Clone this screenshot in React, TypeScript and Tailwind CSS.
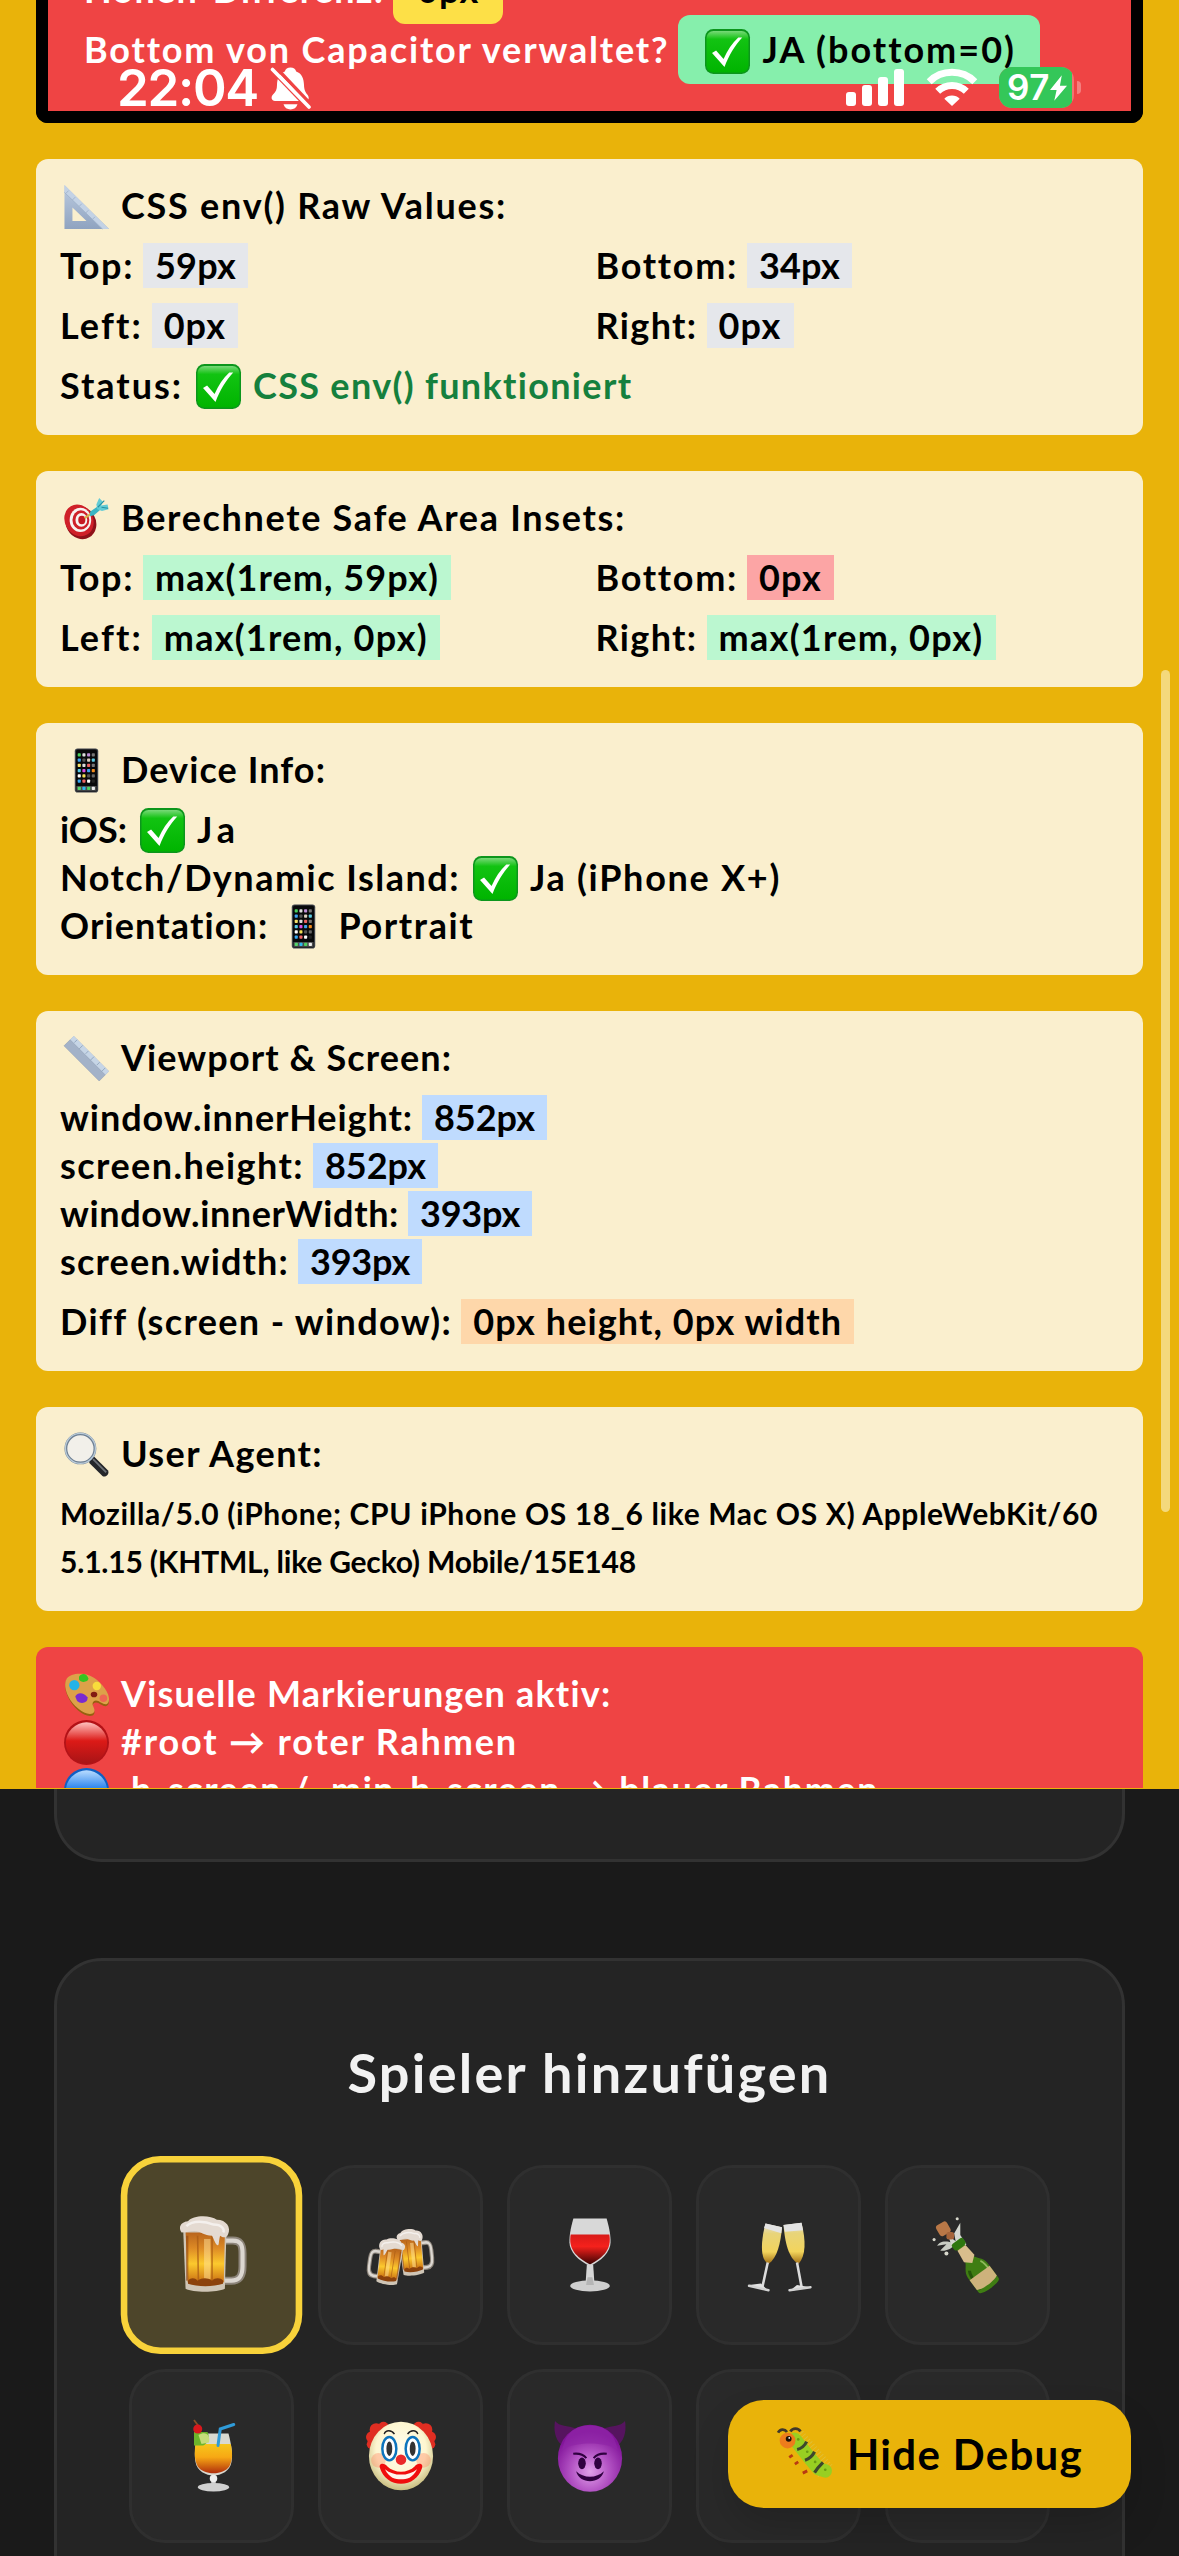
import { useLayoutEffect, useRef, useState } from "react";
import type { ReactNode } from "react";

/* Single-line text whose tracking is tuned so that it fills the given width. */
function Fit({ w, children, className = "" }: { w: number; children: string; className?: string }) {
  const ref = useRef<HTMLSpanElement>(null);
  const [spacing, setSpacing] = useState(0);
  useLayoutEffect(() => {
    const el = ref.current;
    if (!el) return;
    el.style.letterSpacing = "0px";
    const s = (w - el.getBoundingClientRect().width) / children.length;
    el.style.letterSpacing = `${s}px`;
    setSpacing(s);
  }, [w, children]);
  return (
    <span ref={ref} className={`inline-block shrink-0 whitespace-pre ${className}`} style={{ letterSpacing: `${spacing}px` }}>
      {children}
    </span>
  );
}

const Svg = ({ children, className = "size-[45px]" }: { children: ReactNode; className?: string }) => (
  <svg viewBox="0 0 48 48" className={`shrink-0 overflow-visible ${className}`} fill="none">
    {children}
  </svg>
);

const Check = () => (
  <Svg>
    <defs>
      <linearGradient id="ck" x1="0" y1="0" x2="0" y2="1">
        <stop offset="0" stopColor="#7ad97a" />
        <stop offset=".2" stopColor="#12c312" />
        <stop offset="1" stopColor="#00b400" />
      </linearGradient>
    </defs>
    <rect width="48" height="48" rx="9" fill="#0c961c" />
    <rect x="1.6" y="2" width="44.8" height="44.4" rx="7.5" fill="url(#ck)" />
    <path d="M7.5 25.5l4.3-2.6 8 9.2C24 22.500 29 15 35.500 9h4.200C31.500 18 25.500 28 20.800 40.500z" fill="#fff" />
  </Svg>
);

const SetSquare = () => (
  <Svg>
    <defs>
      <linearGradient id="sq" x1="0" y1="0" x2="0" y2="1">
        <stop offset="0" stopColor="#bccbe0" />
        <stop offset="1" stopColor="#8fa3c0" />
      </linearGradient>
    </defs>
    <path d="M0.500 1L48 48H0.500zM9 25v14.500h15z" fill="url(#sq)" fillRule="evenodd" />
    <path d="M0.500 1L48 48h-7L0.500 9z" fill="#c3d2e5" />
    <path d="M0.500 9L41 48" stroke="#9fb2cb" />
    <path d="M5 7l-3 3M12 14l-3 3M19 21l-3 3M26 28l-3 3M33 35l-3 3" stroke="#9fb2cb" />
  </Svg>
);

const Target = () => (
  <Svg>
    <ellipse cx="18" cy="28.500" rx="16" ry="18" transform="rotate(-30 18 28.500)" fill="#8e1119" />
    <ellipse cx="16" cy="26" rx="15" ry="17.500" transform="rotate(-30 16 26)" fill="#cf2029" />
    <ellipse cx="17.500" cy="25.500" rx="11.500" ry="13" fill="#f7f3f1" />
    <ellipse cx="18" cy="25.500" rx="9" ry="10.200" fill="#cf2029" />
    <ellipse cx="18.500" cy="25.500" rx="6.300" ry="7.300" fill="#f7f3f1" />
    <ellipse cx="19" cy="25.500" rx="3.800" ry="4.500" fill="#c51a23" />
    <path d="M22 23.500l8-5.500" stroke="#d8b34a" strokeWidth="2.200" />
    <path d="M28 16.500l9-6 3 3-8 7-4.500 1z" fill="#39b5c4" />
    <path d="M34.500 9l3-7 4 4-2 4 7-1 1 5-7 2-5-2z" fill="#62cbd5" />
    <path d="M36 12l7-7M40 12l7 1" stroke="#2492a3" strokeWidth="1.200" />
  </Svg>
);

const Phone = () => {
  const colors = ["#4ad15c", "#ddd", "#bf8fd8", "#777", "#3fa4f0", "#555", "#ddd0c0", "#5ccbe0", "#f5e36a", "#ddd", "#ee6262", "#777", "#56cbe9", "#da4ee0", "#3fa4f0", "#f08a1c", "#fff", "#f2df55", "#555", "#666", "#35a7f2", "#ee6464", "#fff", "#222"];
  return (
    <Svg>
      <rect x="11.500" y="0.500" width="25" height="47" rx="3" fill="#3e434a" />
      <rect x="12.800" y="1.500" width="22.400" height="45" rx="2" fill="#08090b" />
      {colors.map((c, i) => (
        <rect key={i} x={14.600 + (i % 4) * 5} y={5.500 + Math.floor(i / 4) * 5.600} width="3.300" height="3.600" rx="0.800" fill={c} />
      ))}
      <rect x="13.300" y="40.500" width="21.400" height="5.200" fill="#4b4d50" />
      {["#54d66a", "#2fb8ee", "#4dd05f", "#eee"].map((c, i) => (
        <rect key={c} x={14.600 + i * 5} y="41.400" width="3.400" height="3.500" rx="0.800" fill={c} />
      ))}
    </Svg>
  );
};

const Ruler = () => (
  <Svg>
    <path d="M10.500 0L48 37.500 37.500 48 0 10.500z" fill="#a3b2c8" />
    <path d="M10.500 0L48 37.500 44 41.500 6.500 4z" fill="#c6d5e6" />
    <path d="M6.500 4L44 41.500 37.500 48 0 10.500z" stroke="#8797ae" strokeOpacity=".5" />
    <path d="M14 4l-3 3M20 10l-4 4M26 16l-3 3M32 22l-4 4M38 28l-3 3M44 34l-4 4" stroke="#91a5bd" />
  </Svg>
);

const Magnifier = () => (
  <Svg>
    <path d="M27 30l5-4 15 15c2 4-3 8-6 6L27 33z" fill="#24262a" />
    <path d="M31 29l14 14" stroke="#6d7177" strokeWidth="2" />
    <circle cx="17.500" cy="17.500" r="15.500" fill="#f2f0ea" stroke="#6f8194" strokeWidth="3" />
    <circle cx="17.500" cy="17.500" r="16" stroke="#b9cad8" strokeWidth="1.400" />
  </Svg>
);

const Palette = () => (
  <Svg>
    <path d="M3 8C8 1 27 0 38 12c9 9 12 19 9 23-4 5-10-5-15-2-5 4 4 9-1 13C24 50 10 39 5 28 1 20 0 13 3 8z" fill="#96600f" />
    <path d="M3 7C8 0 27-1 38 11c9 9 12 18 9 22-4 5-10-5-15-2-5 4 4 9-1 13C24 48 10 37 5 27 1 19 0 12 3 7z" fill="#dda149" />
    <circle cx="11" cy="14" r="5.500" fill="#24b3e8" />
    <path d="M16 5c3-5 9-3 10 2 0 4-8 5-10 1z" fill="#36c421" />
    <circle cx="35" cy="15" r="4.500" fill="#f8dc3c" />
    <path d="M12 26c3-5 9-4 13 1 1 6-7 8-11 4z" fill="#7a2bd1" />
    <circle cx="42" cy="28" r="4" fill="#ef6553" />
    <ellipse cx="32" cy="24" rx="3.500" ry="3" fill="#821a12" />
  </Svg>
);

const RedBall = () => (
  <Svg>
    <defs>
      <linearGradient id="rb" x1="0" y1="0" x2="0" y2="1">
        <stop offset="0" stopColor="#ffc0bd" />
        <stop offset=".45" stopColor="#dc1a17" />
        <stop offset="1" stopColor="#a81416" />
      </linearGradient>
    </defs>
    <circle cx="24" cy="24" r="24" fill="#b31217" />
    <circle cx="24" cy="24.500" r="22" fill="url(#rb)" />
  </Svg>
);

const BlueBall = () => (
  <Svg>
    <defs>
      <linearGradient id="bb" x1="0" y1="0" x2="0" y2="1">
        <stop offset="0" stopColor="#b8dcff" />
        <stop offset=".5" stopColor="#1878ea" />
        <stop offset="1" stopColor="#0950ae" />
      </linearGradient>
    </defs>
    <circle cx="24" cy="24" r="24" fill="#0f5fc4" />
    <circle cx="24" cy="24.500" r="22" fill="url(#bb)" />
  </Svg>
);

const BeerDefs = () => (
  <defs>
    <linearGradient id="beer" x1="0" y1="0" x2="0" y2="1">
      <stop offset="0" stopColor="#b9651c" />
      <stop offset=".3" stopColor="#dd8a25" />
      <stop offset=".6" stopColor="#fcc92d" />
      <stop offset="1" stopColor="#c46410" />
    </linearGradient>
  </defs>
);

const Mug = () => (
  <>
    <path d="M31 15h6c5 0 6 3 6 8v8c0 6-2 9-7 9h-6" stroke="#8d857b" strokeWidth="5" />
    <path d="M31 15h6c5 0 6 3 6 8v8c0 6-2 9-7 9h-6" stroke="#dcd7d1" strokeWidth="2.600" />
    <path d="M6 8h27l-1 37c-5 2.500-20 2.500-24.500 0z" fill="#cfc5b6" />
    <path d="M7.500 10h24.500l-.7 31c-6 2-16 2-22.500 0z" fill="url(#beer)" />
    <path d="M15 12l.5 29M24 12v29" stroke="#a85a14" strokeOpacity=".7" />
    <path d="M8.500 12v28" stroke="#8f4510" strokeOpacity=".6" strokeWidth="1.500" />
    <path d="M19 14h4v25h-4z" fill="#ffe29a" fillOpacity=".5" />
    <path d="M9 40c2-2 4-2 6 0 3-2 6-2 9 0 2-2 5-2 7 0l-.2 2c-6 2-16 2-21.800 0z" fill="#8c420c" />
    <path d="M5 10C2 5 7 3 9 3c3-4 14-4 18-1 6 0 9 5 7 9-1 3-4 2-5 1-1 4-.5 6-1.500 6S25 14 24 12c-5 0-7-3-11-3-3 0-5 1-8 1z" fill="#e4dad1" />
    <path d="M8 6c4-4 12-3 17-1 5 0 7 3 6 5" stroke="#fff" strokeWidth="1.500" strokeOpacity=".6" />
  </>
);

const Beer = ({ className }: { className?: string }) => (
  <Svg className={className}>
    <BeerDefs />
    <Mug />
  </Svg>
);

const Cheers = () => (
  <Svg className="size-[68px]">
    <BeerDefs />
    <g transform="translate(18 7) rotate(-6) scale(.6 .7)">
      <Mug />
    </g>
    <g transform="translate(30 14) rotate(8) scale(-.6 .7)">
      <Mug />
    </g>
  </Svg>
);

const Wine = () => (
  <Svg className="size-[76px]">
    <defs>
      <linearGradient id="wn" x1="0" y1="0" x2="0" y2="1">
        <stop offset="0" stopColor="#d81a18" />
        <stop offset=".4" stopColor="#f5211c" />
        <stop offset="1" stopColor="#3a0303" />
      </linearGradient>
    </defs>
    <path d="M13.500 1h21c2 7 2.500 11 2.500 15 0 6-6 12-13 15-7-3-13-9-13-15 0-4 .5-8 2.500-15z" fill="#d8d8d8" />
    <path d="M11.800 11h24.400c1.500 9-3 14-12.200 19C14.800 25 10.300 20 11.800 11z" fill="url(#wn)" />
    <path d="M22 30h4l.8 12h-5.600z" fill="#d6d6d6" />
    <ellipse cx="24" cy="43.500" rx="12.500" ry="3.500" fill="#cfcfcf" />
    <path d="M22.500 38h3l1 5h-5z" fill="#b5b5b5" />
  </Svg>
);

const Flutes = () => (
  <Svg className="size-[72px]">
    <defs>
      <linearGradient id="fl" x1="0" y1="0" x2="0" y2="1">
        <stop offset="0" stopColor="#e4e0d8" />
        <stop offset=".25" stopColor="#e8d47a" />
        <stop offset=".7" stopColor="#f2d45c" />
        <stop offset="1" stopColor="#a06d14" />
      </linearGradient>
    </defs>
    <path d="M15 3l11 2.500c-1 11-3 20-9 24.500-6-3-5-16-2-27z" fill="url(#fl)" />
    <path d="M27 4l12-1.500c3 12 3 22-2 27.500C30 26 28 15 27 4z" fill="url(#fl)" />
    <path d="M15 3l11 2.500-.5 4L14 6z" fill="#e3e3e3" />
    <path d="M27 4l12-1.500 1 5-12 1z" fill="#e3e3e3" />
    <path d="M16.500 29L13 45M36 29l3 16" stroke="#dcdcdc" strokeWidth="1.700" />
    <path d="M4 44l8-1 5 5zM31 48l5-4 9 1.500z" fill="#e3e3e3" />
    <path d="M4 44.500l13 3M31 47.500l14-2" stroke="#d3d3d3" strokeWidth="1.600" strokeLinecap="round" />
  </Svg>
);

const Bottle = () => (
  <Svg className="size-[74px]">
    <path d="M14 16c-6-2-9 0-10 2l6-1-4 4c3 1 7-1 9-3z" fill="#c9cdc4" />
    <path d="M13 17l-2-6 5 4-1-5 4-7 0 8 4 6-5 4z" fill="#d5d8d0" />
    <rect x="4" y="3" width="8" height="8" rx="2" transform="rotate(-30 8 7)" fill="#b97847" />
    <rect x="10" y="9" width="5" height="5" rx="1.500" fill="#a5643a" />
    <g transform="translate(18 17) rotate(-36)">
      <path d="M-3 0h6v10c0 4 5 6 5 11v12c0 3-16 3-16 0V21c0-5 5-7 5-11z" fill="#3f7d13" />
      <path d="M-4.500 18c-2 3-1.500 8-1.500 14" stroke="#24540a" strokeWidth="2" />
      <path d="M5 17c2 3 1.500 8 1.500 14" stroke="#8fbb5a" strokeWidth="1.200" />
      <path d="M-3.200 3h6.400l1 8.500L0 15l-4.200-3.500z" fill="#d8bd8c" />
      <path d="M-8 23H8v8c-4 2-12 2-16 0z" fill="#cdb27c" />
      <rect x="-4.500" y="-2.500" width="9" height="5" rx="1.500" fill="#2e760f" />
    </g>
    <circle cx="17" cy="0.500" r="1" fill="#d8d8cc" />
    <circle cx="2" cy="14" r="1" fill="#d8d8cc" />
    <circle cx="10" cy="23" r="1.300" fill="#d8d8cc" />
  </Svg>
);

const Cocktail = () => (
  <Svg className="size-[72px]">
    <defs>
      <linearGradient id="ct" x1="0" y1="0" x2="0" y2="1">
        <stop offset="0" stopColor="#f6c61b" />
        <stop offset=".45" stopColor="#f7a814" />
        <stop offset="1" stopColor="#b02e0c" />
      </linearGradient>
    </defs>
    <path d="M14 9h21c2 8 3 14 2 19-1 6-7 9-12 9s-11-3-12-9c-1-5 0-11 1-19z" fill="#d9d9d0" />
    <path d="M13 16h23.500c1.500 7 1 11-1 15-4 6-17 6-21 0-2-4-2.500-8-1.500-15z" fill="url(#ct)" />
    <path d="M28 17l1.500-11 9-3" stroke="#2f9bd8" strokeWidth="2" strokeLinecap="round" />
    <path d="M12 8l9 0c2 4 0 8-3 9h-6z" fill="#6cb52b" />
    <path d="M15 10c5-3 8 0 7 5l-5 1z" fill="#c5dd7a" />
    <path d="M15 4L12 0" stroke="#8b4f24" strokeWidth="1.200" />
    <circle cx="14.500" cy="6" r="3" fill="#d9181c" />
    <path d="M23.500 37h3v6h-3z" fill="#ccc" />
    <circle cx="25" cy="39" r="2.500" fill="#eee" />
    <ellipse cx="25" cy="44.800" rx="10.500" ry="2.800" fill="#d0d0d0" />
  </Svg>
);

const Clown = () => (
  <Svg className="size-[70px]">
    <defs>
      <radialGradient id="cl" cx=".5" cy=".4" r=".6">
        <stop offset="0" stopColor="#fffef0" />
        <stop offset=".65" stopColor="#fdf6d0" />
        <stop offset="1" stopColor="#c8bd80" />
      </radialGradient>
    </defs>
    <g fill="#e02e22">
      <circle cx="7" cy="6" r="4.500" />
      <circle cx="4" cy="11" r="4" />
      <circle cx="12" cy="4" r="3.500" />
      <circle cx="3.500" cy="16" r="3" />
      <circle cx="41" cy="6" r="4.500" />
      <circle cx="44" cy="11" r="4" />
      <circle cx="36" cy="4" r="3.500" />
      <circle cx="44.500" cy="16" r="3" />
    </g>
    <ellipse cx="24" cy="24" rx="22" ry="23.500" fill="url(#cl)" />
    <circle cx="8.500" cy="27" r="5" fill="#ff8a66" fillOpacity=".4" />
    <circle cx="39.500" cy="27" r="5" fill="#ff8a66" fillOpacity=".4" />
    <ellipse cx="16" cy="19" rx="4.800" ry="8" fill="#fff" stroke="#0c74bd" strokeWidth="1.700" />
    <ellipse cx="32" cy="19" rx="4.800" ry="8" fill="#fff" stroke="#0c74bd" strokeWidth="1.700" />
    <ellipse cx="16" cy="19" rx="2" ry="5" fill="#333" />
    <ellipse cx="32" cy="19" rx="2" ry="5" fill="#333" />
    <path d="M12.500 9c1-3 5-3 7 0M28.500 9c2-3 6-3 7 0" stroke="#222" strokeWidth="1" />
    <path d="M9.500 32c-1-4 4-3 5-1 5 5 14 5 19 0 1-2 6-3 5 1-2 7-8 11-14.500 11S11.500 39 9.500 32z" fill="#f00d0d" />
    <path d="M13 33c6 5 16 5 22 0-3 6-7 7-11 7s-8-1-11-7z" fill="#fff4ec" />
    <circle cx="24" cy="26.500" r="3.600" fill="#ea2a2a" />
  </Svg>
);

const Devil = () => (
  <Svg className="size-[70px]">
    <defs>
      <radialGradient id="dv" cx=".5" cy=".7" r=".6">
        <stop offset="0" stopColor="#e0a0ea" />
        <stop offset=".5" stopColor="#b353c4" />
        <stop offset="1" stopColor="#82159a" />
      </radialGradient>
    </defs>
    <path d="M0 0c3 4 9 3 14 5L4 16C0 12-1 6 0 0zM48 0c-3 4-9 3-14 5l10 11c4-4 5-10 4-16z" fill="#56145f" />
    <ellipse cx="24" cy="25.500" rx="22" ry="23" fill="url(#dv)" />
    <path d="M5 20C7 8 14 3 24 3s17 5 19 17C36 14 12 14 5 20z" fill="#8f25a6" fillOpacity=".7" />
    <ellipse cx="18.500" cy="29" rx="2.600" ry="4" fill="#2f0140" />
    <ellipse cx="29.500" cy="29" rx="2.600" ry="4" fill="#2f0140" />
    <path d="M12.500 22.500c4-.5 7 .5 9 3M35.500 22.500c-4-.5-7 .5-9 3" stroke="#2f0140" strokeWidth="1.400" />
    <path d="M14.500 34.500c5 5 14 5 19 0-2 9-17 9-19 0z" fill="#2f0140" />
  </Svg>
);

const Bug = () => (
  <Svg className="size-[54px]">
    <path d="M16 9l26 30" stroke="#d9c95a" strokeWidth="17" strokeDasharray="0.800 2.200" strokeOpacity=".55" />
    <path d="M13 25l-3 2M18 31l-3 2M26 39l-4 2" stroke="#b83a12" strokeWidth="2.500" />
    <path d="M15 11l11 14 10 12 6 2" stroke="#98cf22" strokeWidth="12" strokeLinecap="round" strokeLinejoin="round" />
    <path d="M25.500 13c-2 4-4 6-8.500 7M32.500 22c-2 4-4 6-8.500 7.500M40 31.500c-3 3-5 5-7.500 9" stroke="#3d472c" strokeWidth="2.800" />
    <circle cx="18" cy="11" r="1.200" fill="#6b9c12" />
    <circle cx="26" cy="22" r="1.200" fill="#6b9c12" />
    <circle cx="33" cy="31" r="1.200" fill="#6b9c12" />
    <circle cx="42" cy="38" r="1.200" fill="#6b9c12" />
    <circle cx="8.500" cy="12" r="7" fill="#ed7c1c" />
    <circle cx="9.500" cy="10.500" r="2.600" fill="#1f1206" />
    <circle cx="10" cy="9.700" r=".8" fill="#fff" />
    <path d="M0 5c2-3.500 6-3.500 8-.5M11 4c2-3.500 7-3.500 9 0" stroke="#40382a" strokeWidth="2.400" />
  </Svg>
);

const Emoji = ({ children }: { children: ReactNode }) => (
  <span className="flex h-12 w-[52px] shrink-0 items-start justify-center pt-px">{children}</span>
);

const Row = ({ children, className = "" }: { children: ReactNode; className?: string }) => (
  <div className={`flex h-12 items-start gap-[9px] leading-[44px] ${className}`}>{children}</div>
);

const Tag = ({ w, color, children }: { w: number; color: string; children: string }) => (
  <span className={`h-[45px] px-3 ${color}`}>
    <Fit w={w}>{children}</Fit>
  </span>
);

const Field = ({ label, lw, value, vw, color }: { label: string; lw: number; value: string; vw: number; color: string }) => (
  <Row>
    <Fit w={lw}>{label}</Fit>
    <Tag w={vw} color={color}>{value}</Tag>
  </Row>
);

const Card = ({ icon, title, tw, children }: { icon: ReactNode; title: string; tw: number; children: ReactNode }) => (
  <section className="mt-9 rounded-xl bg-[#faefce] p-6 text-black">
    <Row className="mb-3">
      <Emoji>{icon}</Emoji>
      <Fit w={tw}>{title}</Fit>
    </Row>
    {children}
  </section>
);

const GRAY = "bg-[#e5e7eb]";
const GREEN = "bg-[#bbf7d0]";
const BLUE = "bg-[#bfdbfe]";

function DebugPanel() {
  return (
    <div className="h-[1789px] overflow-hidden bg-[#e9b30a] px-9 pb-px font-['Lato',sans-serif] text-[36px] font-bold">
      <div className="h-[1788px] overflow-hidden">
        <section className="h-[123px] overflow-hidden rounded-b-xl border-x-12 border-b-12 border-black bg-[#ef4444] pl-9 leading-[68px] text-white">
          <div className="-mt-[45px] flex h-15 items-start gap-[9px]">
            <Fit w={299}>Höhen-Differenz:</Fit>
            <span className="h-[69px] rounded-xl bg-[#fde047] px-6 text-black">
              <Fit w={62}>0px</Fit>
            </span>
          </div>
          <div className="flex h-15 items-start gap-[9px]">
            <Fit w={584}>Bottom von Capacitor verwaltet?</Fit>
            <span className="flex h-[69px] gap-[9px] rounded-xl bg-[#86efac] px-6 text-black">
              <span className="flex h-full w-[51px] items-center justify-center pt-1">
                <Check />
              </span>
              <Fit w={252}>JA (bottom=0)</Fit>
            </span>
          </div>
        </section>

        <Card icon={<SetSquare />} title="CSS env() Raw Values:" tw={386}>
          <div className="grid grid-cols-2 gap-3">
            <Field label="Top:" lw={74} value="59px" vw={81} color={GRAY} />
            <Field label="Bottom:" lw={141} value="34px" vw={81} color={GRAY} />
            <Field label="Left:" lw={82} value="0px" vw={62} color={GRAY} />
            <Field label="Right:" lw={102} value="0px" vw={63} color={GRAY} />
          </div>
          <Row className="mt-3">
            <Fit w={123}>Status:</Fit>
            <Emoji><Check /></Emoji>
            <Fit w={380} className="text-[#15803d]">CSS env() funktioniert</Fit>
          </Row>
        </Card>

        <Card icon={<Target />} title="Berechnete Safe Area Insets:" tw={505}>
          <div className="grid grid-cols-2 gap-3">
            <Field label="Top:" lw={74} value="max(1rem, 59px)" vw={284} color={GREEN} />
            <Field label="Bottom:" lw={141} value="0px" vw={63} color="bg-[#fca5a5]" />
            <Field label="Left:" lw={82} value="max(1rem, 0px)" vw={264} color={GREEN} />
            <Field label="Right:" lw={102} value="max(1rem, 0px)" vw={265} color={GREEN} />
          </div>
        </Card>

        <Card icon={<Phone />} title="Device Info:" tw={205}>
          <Row>
            <Fit w={67}>iOS:</Fit>
            <Emoji><Check /></Emoji>
            <Fit w={43}>Ja</Fit>
          </Row>
          <Row>
            <Fit w={400}>Notch/Dynamic Island:</Fit>
            <Emoji><Check /></Emoji>
            <Fit w={251}>Ja (iPhone X+)</Fit>
          </Row>
          <Row>
            <Fit w={209}>Orientation:</Fit>
            <Emoji><Phone /></Emoji>
            <Fit w={136}>Portrait</Fit>
          </Row>
        </Card>

        <Card icon={<Ruler />} title="Viewport &amp; Screen:" tw={331}>
          <Field label="window.innerHeight:" lw={353} value="852px" vw={101} color={BLUE} />
          <Field label="screen.height:" lw={244} value="852px" vw={101} color={BLUE} />
          <Field label="window.innerWidth:" lw={339} value="393px" vw={100} color={BLUE} />
          <Field label="screen.width:" lw={229} value="393px" vw={100} color={BLUE} />
          <div className="mt-3">
            <Field label="Diff (screen - window):" lw={391} value="0px height, 0px width" vw={369} color="bg-[#fed7aa]" />
          </div>
        </Card>

        <Card icon={<Magnifier />} title="User Agent:" tw={202}>
          <div className="text-[30px]">
            <Row>
              <Fit w={1038}>Mozilla/5.0 (iPhone; CPU iPhone OS 18_6 like Mac OS X) AppleWebKit/60</Fit>
            </Row>
            <Row>
              <Fit w={576}>5.1.15 (KHTML, like Gecko) Mobile/15E148</Fit>
            </Row>
          </div>
        </Card>

        <section className="mt-9 rounded-t-xl bg-[#ef4444] p-6 text-white">
          <Row>
            <Emoji><Palette /></Emoji>
            <Fit w={491}>Visuelle Markierungen aktiv:</Fit>
          </Row>
          <Row>
            <Emoji><RedBall /></Emoji>
            <Fit w={397}>#root → roter Rahmen</Fit>
          </Row>
          <Row>
            <Emoji><BlueBall /></Emoji>
            <Fit w={758}>.h-screen / .min-h-screen → blauer Rahmen</Fit>
          </Row>
        </section>
      </div>
    </div>
  );
}

function StatusBar() {
  return (
    <div className="absolute top-0 left-0 h-[123px] w-full font-['Inter',sans-serif] text-white">
      <span className="absolute top-[58px] left-[117px] text-[51px] leading-[60px] font-semibold">
        <Fit w={141}>22:04</Fit>
      </span>
      <svg className="absolute top-[66px] left-[270px] h-[44px] w-[41px]" viewBox="0 0 41 44" fill="none">
        <path d="M20.500 1.500c3 0 5 1.600 5.700 4 5.800 2.200 7.600 7 7.800 13.500.1 5 1.600 7.500 3.500 9.800 2 2.300 1.500 6.200-1.500 6.200H5c-3.500 0-4.500-4-2-6.500 2.800-2.800 4-5 4-9.500.2-6.500 2-11.300 7.800-13.500.7-2.400 2.700-4 5.700-4z" fill="white" />
        <path d="M13.500 38.300h14c-1 3.400-3.600 5.200-7 5.200s-6-1.800-7-5.200z" fill="white" />
        <path d="M4.500 0L41 38.500" stroke="#ef4444" strokeWidth="3.500" />
        <path d="M2.500 5L38 42" stroke="#ef4444" strokeWidth="3.500" />
        <path d="M2.500 3.500L39 41" stroke="white" strokeWidth="3.600" strokeLinecap="round" />
      </svg>
      <svg className="absolute top-[68px] left-[845px] h-[39px] w-[60px]" viewBox="0 0 60 39" fill="white">
        <rect x="1" y="24" width="10" height="14" rx="3" />
        <rect x="17" y="17" width="10" height="21" rx="3" />
        <rect x="33" y="9" width="10" height="29" rx="3" />
        <rect x="49" y="1" width="10" height="37" rx="3" />
      </svg>
      <svg className="absolute top-[68px] left-[926px] h-[39px] w-[52px]" viewBox="0 0 52 39" fill="none">
        <path d="M3.200 13.700a32.500 32.500 0 0 1 45.600 0" stroke="white" strokeWidth="7" />
        <path d="M11.700 23.200a20.500 20.500 0 0 1 28.600 0" stroke="white" strokeWidth="7" />
        <path d="M18.300 30.700a11 11 0 0 1 15.400 0L26 38z" fill="white" />
      </svg>
      <div className="absolute top-[67px] left-[999px] h-[41px] w-[75px] overflow-hidden rounded-[13px] bg-[#f47373]">
        <div className="flex h-full w-[73px] items-center bg-[#34c759] pl-2">
          <span className="text-[35px] leading-[41px] font-semibold">
            <Fit w={43}>97</Fit>
          </span>
          <svg className="h-[26px] w-[17px]" viewBox="0 0 18 27" fill="white">
            <path d="M12.500 0L0 15.500h7L4.500 27 18 11h-7.500z" />
          </svg>
        </div>
      </div>
      <div className="absolute top-[81px] left-[1077px] h-[13px] w-1 rounded-r-full bg-[#f47f7f]" />
    </div>
  );
}

const TILE = "flex items-center justify-center rounded-[36px] border-3 border-[#2f2f2f] bg-[#292929]";

function PlayerSection() {
  return (
    <div className="h-[767px] overflow-hidden bg-[#1a1a1a] px-[54px]">
      <div className="h-[73px] rounded-b-[48px] border-x-3 border-b-3 border-[#323232] bg-[#242424]" />
      <section className="mt-24 h-[700px] rounded-[48px] border-3 border-[#323232] bg-[#242424] px-[72px] pt-[72px] font-['Lato',sans-serif]">
        <h2 className="flex h-[84px] justify-center text-[54px] leading-[79px] font-bold text-[#f2f2f2]">
          <Fit w={484}>Spieler hinzufügen</Fit>
        </h2>
        <div className="mt-12 grid grid-cols-5 grid-rows-[180px_174px] gap-6">
          <div className="flex scale-110 items-center justify-center rounded-[36px] border-6 border-[#f8d23a] bg-[#4d452a]">
            <Beer className="size-[70px]" />
          </div>
          <div className={TILE}><Cheers /></div>
          <div className={TILE}><Wine /></div>
          <div className={TILE}><Flutes /></div>
          <div className={TILE}><Bottle /></div>
          <div className={TILE}><Cocktail /></div>
          <div className={TILE}><Clown /></div>
          <div className={TILE}><Devil /></div>
          <div className={TILE} />
          <div className={TILE} />
        </div>
      </section>
    </div>
  );
}

export default function App() {
  return (
    <main className="relative h-[2556px] w-[1179px] overflow-hidden bg-[#1a1a1a]">
      <DebugPanel />
      <PlayerSection />
      <div className="absolute top-[670px] left-[1161px] h-[842px] w-[9px] rounded-full bg-[#f4d97c]" />
      <StatusBar />
      <button className="absolute top-[2400px] left-[728px] flex h-[108px] w-[403px] items-center rounded-[36px] bg-[#e9b30a] pl-[50px] font-['Lato',sans-serif] text-[42px] leading-[50px] font-bold text-black shadow-[0_20px_40px_-4px_rgba(0,0,0,0.18)]">
        <Bug />
        <span className="mb-px ml-[15px]">
          <Fit w={236}>Hide Debug</Fit>
        </span>
      </button>
    </main>
  );
}
